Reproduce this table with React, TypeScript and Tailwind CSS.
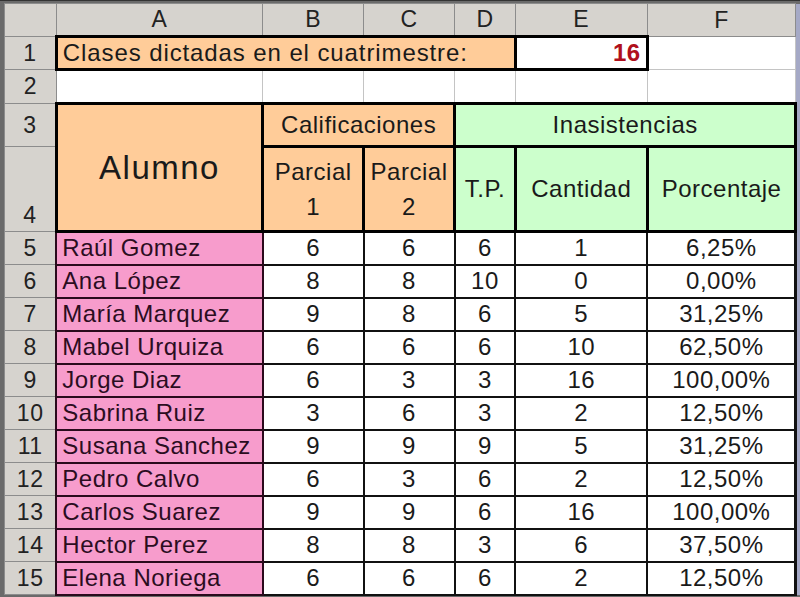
import React from "react";

const alumnos = [
  { name: "Raúl Gomez", p1: 6, p2: 6, tp: 6, cant: 1, pct: "6,25%" },
  { name: "Ana López", p1: 8, p2: 8, tp: 10, cant: 0, pct: "0,00%" },
  { name: "María Marquez", p1: 9, p2: 8, tp: 6, cant: 5, pct: "31,25%" },
  { name: "Mabel Urquiza", p1: 6, p2: 6, tp: 6, cant: 10, pct: "62,50%" },
  { name: "Jorge Diaz", p1: 6, p2: 3, tp: 3, cant: 16, pct: "100,00%" },
  { name: "Sabrina Ruiz", p1: 3, p2: 6, tp: 3, cant: 2, pct: "12,50%" },
  { name: "Susana Sanchez", p1: 9, p2: 9, tp: 9, cant: 5, pct: "31,25%" },
  { name: "Pedro Calvo", p1: 6, p2: 3, tp: 6, cant: 2, pct: "12,50%" },
  { name: "Carlos Suarez", p1: 9, p2: 9, tp: 6, cant: 16, pct: "100,00%" },
  { name: "Hector Perez", p1: 8, p2: 8, tp: 3, cant: 6, pct: "37,50%" },
  { name: "Elena Noriega", p1: 6, p2: 6, tp: 6, cant: 2, pct: "12,50%" },
];

const hdr = "border border-[#8c8c8c] bg-[#d6d3ce] text-[#222] text-center font-normal p-0 text-[23px]";
const thin = "border border-[#c4c4c4] bg-white p-0";
const thick = "border-[3px] border-black p-0";
const cell = "border-2 border-[#111] bg-white text-center p-0";

export default function App() {
  return (
    <div
      className="w-[800px] h-[597px] overflow-hidden bg-[#6a6a6a] pl-[4px] pt-[2px] border-t border-[#333]"
      style={{ fontFamily: '"Liberation Sans", Arial, sans-serif' }}
    >
      <table className="table-fixed border-collapse text-[24px] tracking-[0.5px] leading-none text-[#1a1a1a]">
        <colgroup>
          <col className="w-[52px]" />
          <col className="w-[207px]" />
          <col className="w-[101px]" />
          <col className="w-[91px]" />
          <col className="w-[61px]" />
          <col className="w-[132px]" />
          <col className="w-[149px]" />
          <col className="w-[4px]" />
        </colgroup>
        <tbody>
          <tr className="h-[33px]">
            <th className={hdr}></th>
            {["A", "B", "C", "D", "E", "F"].map((c) => (
              <th key={c} className={hdr}>
                {c}
              </th>
            ))}
            <th className="bg-[#a5a9c6] p-0"></th>
          </tr>
          <tr className="h-[33px]">
            <th className={hdr}>1</th>
            <td colSpan={4} className={`${thick} bg-[#ffcc99] pl-[5px] text-left tracking-[0.9px]`}>
              Clases dictadas en el cuatrimestre:
            </td>
            <td className={`${thick} bg-white text-right pr-[5px] font-bold text-[#b0101c]`}>16</td>
            <td className={thin}></td>
            <td className="bg-[#a5a9c6] p-0"></td>
          </tr>
          <tr className="h-[34px]">
            <th className={hdr}>2</th>
            <td className={thin}></td>
            <td className={thin}></td>
            <td className={thin}></td>
            <td className={thin}></td>
            <td className={thin}></td>
            <td className={thin}></td>
            <td className="bg-[#a5a9c6] p-0"></td>
          </tr>
          <tr className="h-[43px]">
            <th className={hdr}>3</th>
            <td rowSpan={2} className={`${thick} bg-[#ffcc99] text-center text-[33px] tracking-[1.5px]`}>
              Alumno
            </td>
            <td colSpan={2} className={`${thick} bg-[#ffcc99] text-center`}>
              Calificaciones
            </td>
            <td colSpan={3} className={`${thick} bg-[#ccffcc] text-center`}>
              Inasistencias
            </td>
            <td className="bg-[#a5a9c6] p-0"></td>
          </tr>
          <tr className="h-[85px]">
            <th className={`${hdr} align-bottom pb-[4px]`}>4</th>
            <td className={`${thick} bg-[#ffcc99] text-center leading-[35px]`}>
              Parcial
              <br />1
            </td>
            <td className={`${thick} bg-[#ffcc99] text-center leading-[35px]`}>
              Parcial
              <br />2
            </td>
            <td className={`${thick} bg-[#ccffcc] text-center`}>T.P.</td>
            <td className={`${thick} bg-[#ccffcc] text-center`}>Cantidad</td>
            <td className={`${thick} bg-[#ccffcc] text-center`}>Porcentaje</td>
            <td className="bg-[#a5a9c6] p-0"></td>
          </tr>
          {alumnos.map((a, i) => (
            <tr key={a.name} className="h-[33px]">
              <th className={hdr}>{i + 5}</th>
              <td className="border-2 border-[#2a0a1c] bg-[#f79ccc] text-left pl-[5px] text-[#2b0d1f]">
                {a.name}
              </td>
              <td className={cell}>{a.p1}</td>
              <td className={cell}>{a.p2}</td>
              <td className={cell}>{a.tp}</td>
              <td className={cell}>{a.cant}</td>
              <td className={`${cell} border-r-[3px]`}>{a.pct}</td>
              <td className="bg-[#a5a9c6] p-0"></td>
            </tr>
          ))}
        </tbody>
      </table>
    </div>
  );
}
